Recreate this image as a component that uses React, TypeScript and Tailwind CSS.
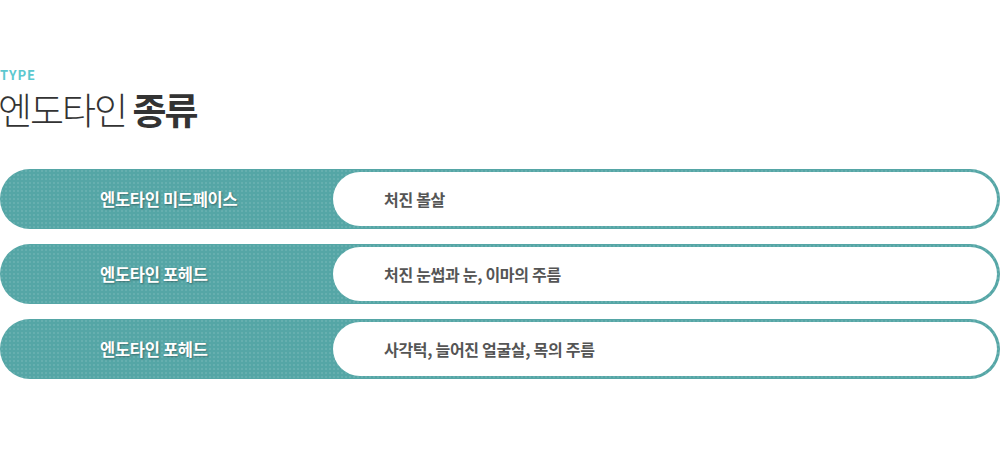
import React from 'react'

const rows = [
    { label: '엔도타인 미드페이스', desc: '처진 볼살' },
    { label: '엔도타인 포헤드', desc: '처진 눈썹과 눈, 이마의 주름' },
    { label: '엔도타인 포헤드', desc: '사각턱, 늘어진 얼굴살, 목의 주름' },
]

const App = () => {
    return (
        <div className="w-[1000px] h-[449px] bg-white font-['Noto_Sans_CJK_KR','Noto_Sans',sans-serif]">
            <div className="pt-[68px]">
                <div className="text-[13px] font-bold tracking-[1px] text-[#5cc8cf] leading-[14px]">TYPE</div>
                <h2 className="mt-[8px] text-[37px] leading-[38px] text-[#333] tracking-[-2px] -ml-[2px]">
                    <span className="font-light">엔도타인</span> <span className="font-semibold">종류</span>
                </h2>
            </div>

            <div className="mt-[41px] flex flex-col gap-[15px]">
                {rows.map((row, i) => (
                    <div
                        key={i}
                        className="h-[60px] rounded-full bg-[#55a6a6] bg-[radial-gradient(rgba(255,255,255,0.22)_0.6px,transparent_0.8px)] bg-[length:4px_4px] flex p-[3px] pl-0"
                    >
                        <div className="w-[333px] flex items-center pl-[100px]">
                            <span className="text-white text-[16.5px] font-bold tracking-[-0.3px] [text-shadow:1px_1px_2px_rgba(0,0,0,0.35)]">
                                {row.label}
                            </span>
                        </div>
                        <div className="flex-1 bg-white rounded-full flex items-center pl-[51px]">
                            <span className="text-[#555] text-[16px] font-bold tracking-[-0.3px]">{row.desc}</span>
                        </div>
                    </div>
                ))}
            </div>
        </div>
    )
}

export default App
